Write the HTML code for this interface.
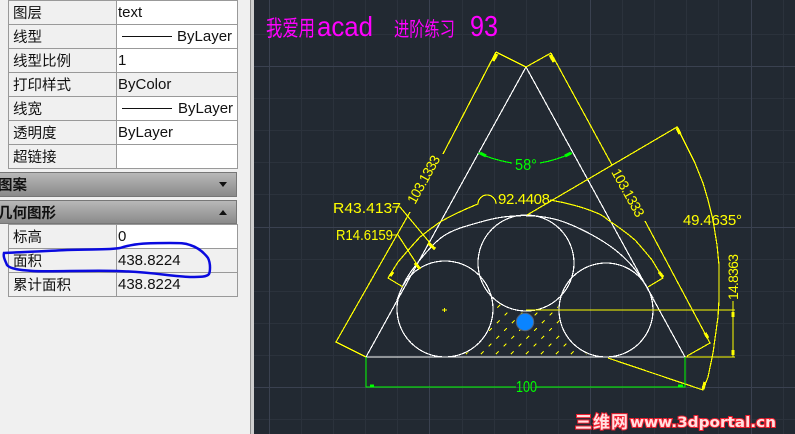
<!DOCTYPE html>
<html><head><meta charset="utf-8"><style>
html,body{margin:0;padding:0;width:795px;height:434px;overflow:hidden;background:#f0f0f0}
body{position:relative;font-family:"Liberation Sans","Noto Sans CJK SC",sans-serif;font-size:15px;color:#111}
.r{position:absolute;left:8px;width:228px;height:23px;border:1px solid #999;background:#f0f0f0}
.r i{position:absolute;left:107px;top:0;width:120px;height:23px;border-left:1px solid #999;background:#fff}
.r.g i{background:#f0f0f0}
.r b,.r span{position:absolute;font-weight:400;line-height:24px;top:0;white-space:nowrap}
.r b{left:4px;font-family:"Noto Sans CJK SC",sans-serif;font-size:14.5px}
.r span{left:109px}
.l{position:absolute;left:113px;width:50px;height:1px;top:11px;background:#111}
.h{position:absolute;left:-1px;width:238px;height:24px;background:linear-gradient(#b8b8b8,#8a8a8a);border:1px solid #777;box-sizing:border-box;font-family:"Noto Sans CJK SC",sans-serif;font-weight:700;font-size:14.5px;line-height:23px;text-indent:-2px;overflow:hidden}
.t{position:absolute;left:219px;width:0;height:0;border-left:4.5px solid transparent;border-right:4.5px solid transparent}
svg{position:absolute;left:0;top:0}
.c{shape-rendering:crispEdges}
</style></head><body>
<div class="r" style="top:0"><i></i><b>图层</b><span>text</span></div>
<div class="r" style="top:24px"><i></i><b>线型</b><div class="l"></div><span style="left:168px">ByLayer</span></div>
<div class="r" style="top:48px"><i></i><b>线型比例</b><span>1</span></div>
<div class="r g" style="top:72px"><i></i><b>打印样式</b><span>ByColor</span></div>
<div class="r" style="top:96px"><i></i><b>线宽</b><div class="l"></div><span style="left:169px">ByLayer</span></div>
<div class="r" style="top:120px"><i></i><b>透明度</b><span>ByLayer</span></div>
<div class="r" style="top:144px"><i></i><b>超链接</b></div>
<div class="h" style="top:172px;height:25px">图案<div class="t" style="top:9px;border-top:5px solid #111"></div></div>
<div class="h" style="top:200px">几何图形<div class="t" style="top:9px;border-bottom:5px solid #111"></div></div>
<div class="r" style="top:224px"><i></i><b>标高</b><span>0</span></div>
<div class="r g" style="top:248px"><i></i><b>面积</b><span>438.8224</span></div>
<div class="r g" style="top:272px"><i></i><b>累计面积</b><span>438.8224</span></div>
<div style="position:absolute;left:250px;top:0;width:1px;height:434px;background:#8f8f8f"></div>
<div style="position:absolute;left:251px;top:0;width:3px;height:434px;background:#cfcfcf"></div>
<div style="position:absolute;left:254px;top:0;width:541px;height:434px;background:#222932"></div>

<svg width="795" height="434" viewBox="0 0 795 434" fill="none" font-family="Liberation Sans,Noto Sans CJK SC,sans-serif">
<defs><mask id="m" maskUnits="userSpaceOnUse" x="440" y="290" width="180" height="70">
<rect x="440" y="290" width="180" height="67" fill="#fff"/>
<circle cx="445" cy="309" r="49" fill="#000"/><circle cx="606" cy="310" r="48" fill="#000"/><circle cx="526" cy="263" r="49" fill="#000"/>
</mask></defs>
<g class="c">
<path stroke="#2b323c" d="M301.500 0V434M333.500 0V434M365.500 0V434M397.500 0V434M462.500 0V434M494.500 0V434M526.500 0V434M558.500 0V434M622.500 0V434M654.500 0V434M686.500 0V434M718.500 0V434M783.500 0V434M254 34.500H795M254 98.500H795M254 130.500H795M254 162.500H795M254 194.500H795M254 259.500H795M254 291.500H795M254 323.500H795M254 355.500H795M254 419.500H795"/>
<path stroke="#3a4150" d="M269.500 0V434M429.500 0V434M590.500 0V434M751.500 0V434M254 66.500H795M254 227.500H795M254 387.500H795"/>
</g>
<g stroke="#fff" stroke-width="1.2" class="c">
<path d="M526 67L366 357H685Z"/>
<circle cx="445" cy="309" r="48"/><circle cx="606" cy="310" r="47"/><circle cx="526" cy="263" r="48"/>
<path d="M397 300Q403 283 410 273Q417 263 427 251.500Q437 240 445 235Q453 230 466.500 226Q480 222 490 219.500Q500 217 513.500 216Q527 215 540 216.500Q553 218 564 222Q575 226 587.500 232.500Q600 239 610 246Q620 253 629 262.500Q638 272 645.500 285L653 298"/>
</g>
<g mask="url(#m)" stroke="#ffff00" stroke-width="1.2" stroke-dasharray="4 7" class="c">
<path d="M440 350L500 290M443 362L515 290M458 362L530 290M473 362L545 290M488 362L560 290M503 362L575 290M518 362L590 290M533 362L605 290M548 362L620 290M563 362L620 305M578 362L620 320"/>
</g>
<g stroke="#ffff00" stroke-width="1.2" class="c">
<path d="M496 52L526 67M496 52L443 154M410 212L336 342L366 357"/>
<path d="M551 53L526 67M551 53L612 165M645 221L710 343L687 356"/>
<path d="M527 215L677 127L695 163L703 183L708 200L713 220L717 245L719 265L719 300L718 317L713 353L708 377L703 390L608 358"/>
<path d="M526 310H735M685 357H735M733 310V357"/>
<path d="M733 301V310"/>
<path d="M392 207H400L435 249M392 235H398L420 269"/>
<path d="M403 287L388 278L398 262Q409 249 420 237Q430 229 440 222Q456 213 473 206L478 204A9 9 0 0 1 496 204M550 200Q562 202 573 205Q585 208 597 213Q604 216 608 220Q622 229 635 240Q644 250 652 260L663 278L648 287"/>
</g>
<g stroke="#ffff00" stroke-width="3" class="c">
<path d="M497 54L493 61M550 55L554 62M677 128L680 134M428 243L435 249M415 263L420 269M390 276L393 272M663 277L659 272M708 338L705 333M703 389L705 382M733 312V317M733 350V355"/>
</g>
<g stroke="#00ff00" stroke-width="1.2" class="c">
<path d="M366 357V387H516M536 387H685V357M478 153Q494 160 512 163M540 163Q557 160 572 153"/>
</g>
<path stroke="#00ff00" stroke-width="3" d="M370 386H374M678 386H683M480 153L486 156M565 156L571 153"/>
<circle cx="525" cy="322" r="8.700" fill="#0a84ff" stroke="#55657a" stroke-width="1"/>
<path stroke="#ffff00" d="M442 310H447M444.500 308V312"/>
<path d="M4 253C20 252 50 251 67 250C90 249 110 250 120 248C135 243 150 243 170 243C180 243 185 243 190 245C200 248 205 254 208 258C211 264 210 272 209 274C207 277 200 277 190 277C170 276 150 272 117 271C90 270 50 272 33 271C20 270 10 269 7 265C5 260 3 257 4 253Z" stroke="#0a0adf" stroke-width="2.500"/>
<g fill="#ff00ff">
<text x="266" y="36" font-family="Noto Sans CJK SC,sans-serif" font-size="22" textLength="49" lengthAdjust="spacingAndGlyphs">我爱用</text>
<text x="317" y="36" font-size="28" textLength="56" lengthAdjust="spacingAndGlyphs">acad</text>
<text x="394" y="36" font-family="Noto Sans CJK SC,sans-serif" font-size="20" textLength="61" lengthAdjust="spacingAndGlyphs">进阶练习</text>
<text x="470" y="36" font-size="29" textLength="28" lengthAdjust="spacingAndGlyphs">93</text>
</g>
<g fill="#ffff00" font-size="15">
<text x="333" y="213" textLength="68" lengthAdjust="spacingAndGlyphs">R43.4137</text>
<text x="336" y="240" textLength="57" lengthAdjust="spacingAndGlyphs">R14.6159</text>
<text x="498" y="204" textLength="52" lengthAdjust="spacing">92.4408</text>
<text x="683" y="225" textLength="59" lengthAdjust="spacing">49.4635°</text>
<text transform="translate(415,205) rotate(-61)" textLength="53" lengthAdjust="spacing" font-size="14">103.1333</text>
<text transform="translate(611,172) rotate(61)" textLength="53" lengthAdjust="spacing" font-size="14">103.1333</text>
<text transform="translate(738,300) rotate(-90)" textLength="46" lengthAdjust="spacing" font-size="14">14.8363</text>
</g>
<g fill="#00ff00" font-size="16">
<text x="515" y="170" textLength="22" lengthAdjust="spacingAndGlyphs">58°</text>
<text x="516" y="392" textLength="21" lengthAdjust="spacingAndGlyphs">100</text>
</g>
<g fill="#ffe0e0" stroke="#f01e2e" stroke-width="2" paint-order="stroke" font-weight="700">
<text x="575" y="428" font-family="Noto Sans CJK SC,sans-serif" font-size="17" textLength="53" lengthAdjust="spacing">三维网</text>
<text x="630" y="427" font-family="DejaVu Sans,sans-serif" font-size="14" textLength="146" lengthAdjust="spacingAndGlyphs">www.3dportal.cn</text>
</g>
</svg>
</body></html>
